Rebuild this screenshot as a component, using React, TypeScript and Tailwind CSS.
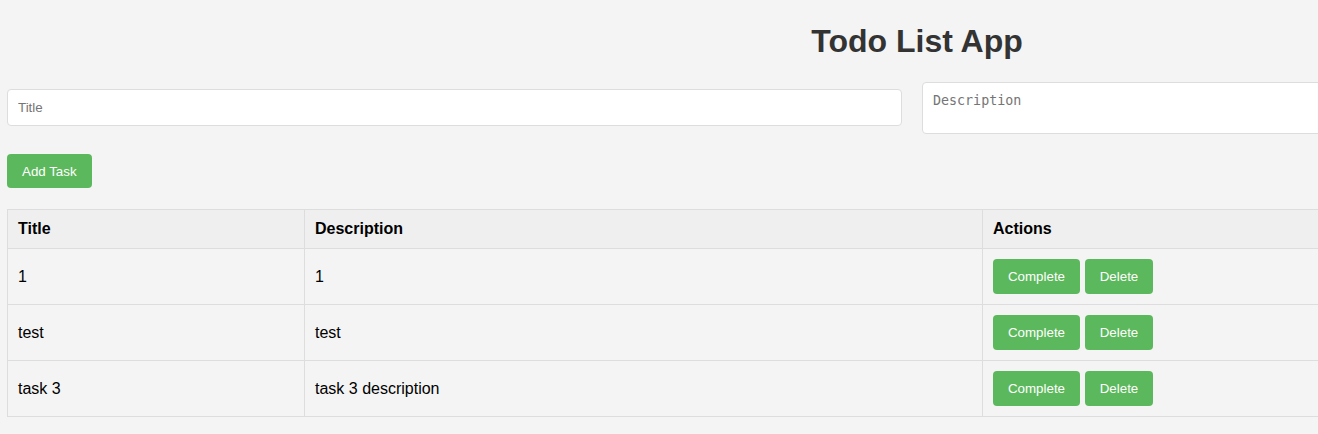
import React from "react";

const tasks = [
  { title: "1", description: "1" },
  { title: "test", description: "test" },
  { title: "task 3", description: "task 3 description" },
];

export default function App() {
  return (
    <div
      className="min-h-screen w-[1834px] bg-[#f4f4f4] px-[7px] pb-4 text-black"
      style={{ fontFamily: '"Liberation Sans", Arial, sans-serif' }}
    >
      <h1 className="m-0 pt-[23px] text-center text-[32px] font-bold leading-[37px] text-[#333]">
        Todo List App
      </h1>
      <div className="mt-[22px] flex items-start gap-[20px]">
        <input
          placeholder="Title"
          className="mt-[7px] w-[895px] rounded-[4px] border border-[#ddd] bg-white px-[10px] py-[10px] text-[13.33px] leading-[15px] outline-none placeholder:text-[#757575]"
          style={{ fontFamily: '"Liberation Sans", Arial, sans-serif' }}
        />
        <textarea
          placeholder="Description"
          rows={2}
          className="h-[52px] w-[903px] resize-none rounded-[4px] border border-[#ddd] bg-white px-[10px] py-[10px] text-[13.33px] leading-[15px] outline-none placeholder:text-[#757575]"
          style={{ fontFamily: '"DejaVu Sans Mono", monospace' }}
        />
      </div>
      <button className="mt-[20px] block h-[34px] rounded-[4px] bg-[#5cb85c] px-[15px] text-[13.33px] leading-[15px] text-white">
        Add Task
      </button>
      <table className="mt-[21px] w-[1820px] border-collapse">
        <thead>
          <tr className="bg-[#efefef]">
            <th className="w-[297px] border border-[#ddd] px-[10px] py-[10px] text-left text-[16px] font-bold leading-[18px]">
              Title
            </th>
            <th className="w-[678px] border border-[#ddd] px-[10px] py-[10px] text-left text-[16px] font-bold leading-[18px]">
              Description
            </th>
            <th className="border border-[#ddd] px-[10px] py-[10px] text-left text-[16px] font-bold leading-[18px]">
              Actions
            </th>
          </tr>
        </thead>
        <tbody>
          {tasks.map((t, i) => (
            <tr key={i}>
              <td className="border border-[#ddd] px-[10px] py-[10px] text-[16px] leading-[18px]">
                {t.title}
              </td>
              <td className="border border-[#ddd] px-[10px] py-[10px] text-[16px] leading-[18px]">
                {t.description}
              </td>
              <td className="border border-[#ddd] px-[10px] py-[10px]">
                <div className="flex gap-[5px]">
                  <button className="h-[35px] w-[87px] rounded-[4px] bg-[#5cb85c] text-[13.33px] leading-[15px] text-white">
                    Complete
                  </button>
                  <button className="h-[35px] w-[68px] rounded-[4px] bg-[#5cb85c] text-[13.33px] leading-[15px] text-white">
                    Delete
                  </button>
                </div>
              </td>
            </tr>
          ))}
        </tbody>
      </table>
    </div>
  );
}
